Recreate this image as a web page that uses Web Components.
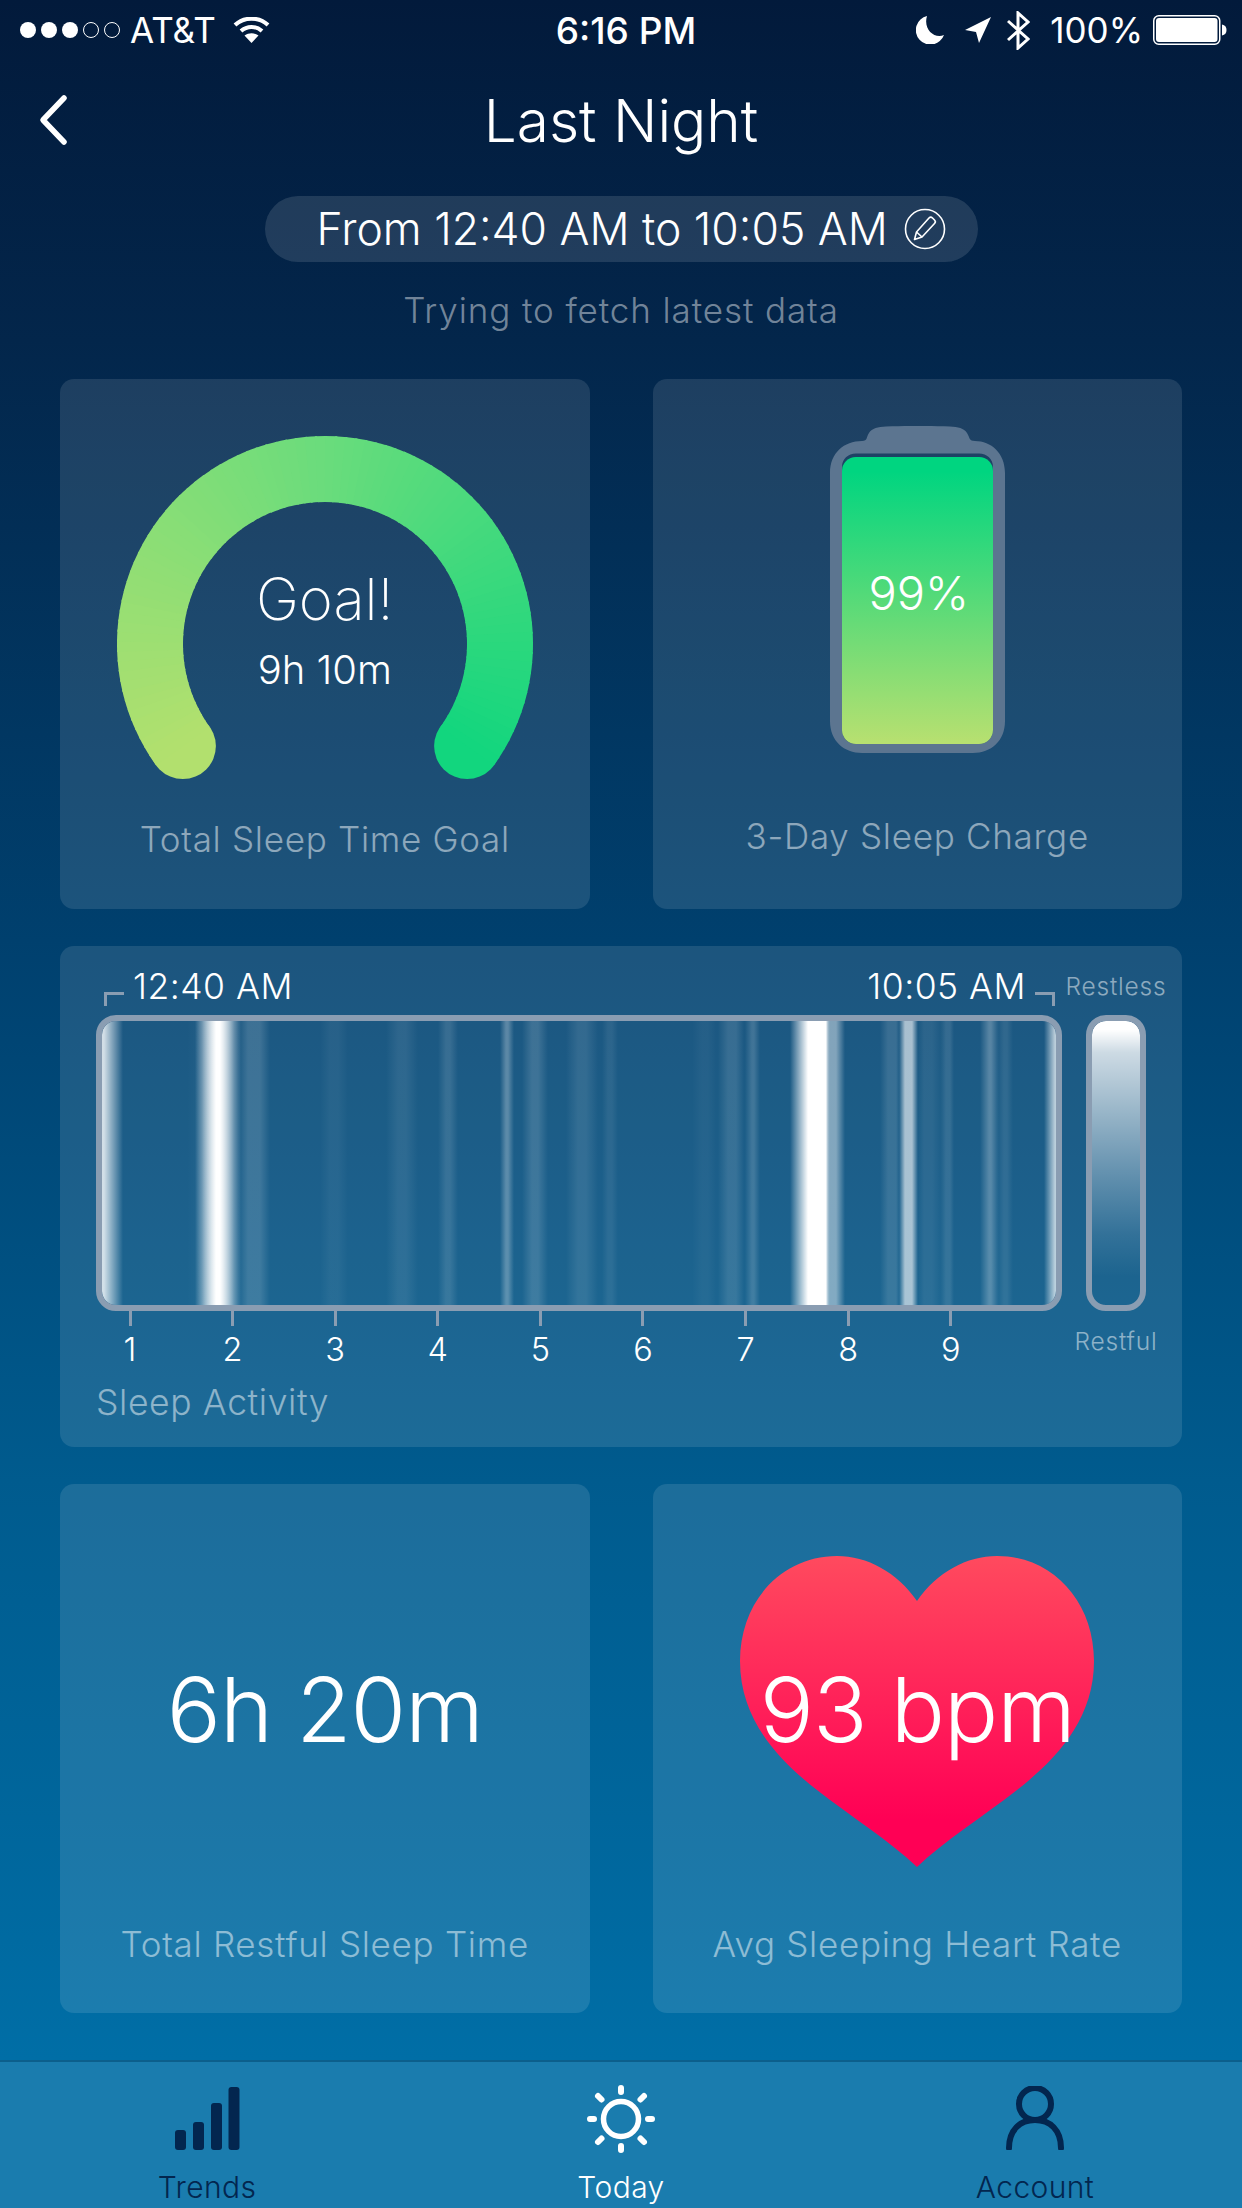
<!DOCTYPE html>
<html>
<head>
<meta charset="utf-8">
<title>Last Night</title>
<style>
html, body { margin: 0; padding: 0; }
body { font-family: Inter, "Liberation Sans", sans-serif; color: #fff; }
</style>
</head>
<body>
<sleep-app>
  <status-bar></status-bar>
  <nav-header>Last Night</nav-header>
  <time-pill>From 12:40 AM to 10:05 AM</time-pill>
  <fetch-hint>Trying to fetch latest data</fetch-hint>
  <card-grid>
    <metric-card label="Total Sleep Time Goal" style="--label-pad:48px"><goal-gauge goal="Goal!" time="9h 10m"></goal-gauge></metric-card>
    <metric-card label="3-Day Sleep Charge" style="--label-pad:51px"><charge-battery value="99%"></charge-battery></metric-card>
    <sleep-activity></sleep-activity>
    <metric-card label="Total Restful Sleep Time" style="--label-pad:47px"><big-stat>6h 20m</big-stat></metric-card>
    <metric-card label="Avg Sleeping Heart Rate" style="--label-pad:47px"><heart-rate>93 bpm</heart-rate></metric-card>
  </card-grid>
  <tab-bar>
    <tab-item name="Trends">
      <svg width="66" height="64" viewBox="0 0 66 64" fill="#03264f">
        <rect x="1" y="44" width="11" height="20" rx="3"/>
        <rect x="19" y="36" width="11" height="28" rx="3"/>
        <rect x="37" y="17" width="11" height="47" rx="3"/>
        <rect x="54.5" y="1" width="11" height="63" rx="3"/>
      </svg>
    </tab-item>
    <tab-item name="Today" active>
      <svg style="display:block;margin-top:-1px" width="72" height="68" viewBox="-36 -34 72 68" fill="none" stroke="#fff" stroke-linecap="round">
        <circle r="17.5" stroke-width="5.5"/>
        <g stroke-width="6">
          <path d="M0 -31V-27M0 31V27M-31 0H-27M31 0H27"/>
          <path d="M-23 -23L-19.500 -19.500M23 -23L19.500 -19.500M-23 23L-19.500 19.500M23 23L19.500 19.500"/>
        </g>
      </svg>
    </tab-item>
    <tab-item name="Account">
      <svg width="58" height="64" viewBox="0 0 58 64" fill="none" stroke="#03264f" stroke-width="6" stroke-linecap="round">
        <ellipse cx="29" cy="18" rx="16" ry="16"/>
        <path d="M3 62C3 44 14 34 29 34C44 34 55 44 55 62"/>
      </svg>
    </tab-item>
  </tab-bar>
</sleep-app>

<script>
// small base class, every element just hands over its shadow markup
class Base extends HTMLElement {
  constructor() {
    super();
    this.attachShadow({ mode: "open" });
    this.shadowRoot.innerHTML = this.render();
  }
  render() { return "<slot></slot>"; }
}

customElements.define("sleep-app", class extends Base {
  render() {
    return `<style>
      :host {
        display: flex; flex-direction: column;
        width: 1242px; height: 2208px; overflow: hidden;
        color: #fff;
        font-family: Inter, "Liberation Sans", sans-serif;
        background: linear-gradient(180deg, #021a3b 0, #03264b 340px, #00406e 940px, #005b8e 1480px, #006ea6 2060px);
      }
    </style><slot></slot>`;
  }
});

customElements.define("status-bar", class extends Base {
  render() {
    return `<style>
      :host { display: grid; grid-template-columns: 1fr auto 1fr; align-items: center; height: 60px; font-size: 35px; }
      .left, .right { display: flex; align-items: center; }
      .left { padding-left: 20px; }
      .right { justify-content: flex-end; padding-right: 15px; }
      .dots { display: flex; gap: 5px; margin-right: 10px; }
      .dots i { width: 16px; height: 16px; border-radius: 50%; background: #fff; box-sizing: border-box; }
      .dots i.off { background: none; border: 1.5px solid #fff; }
      .time { font-size: 37px; font-weight: 500; padding-left: 10px; }
      svg { display: block; }
    </style>
    <div class="left">
      <div class="dots"><i></i><i></i><i></i><i class="off"></i><i class="off"></i></div>
      <span>AT&amp;T</span>
      <svg style="margin-left:17px" width="37" height="26" viewBox="0 0 37 26">
        <path d="M2 8C11 -.5 26 -.5 35 8M8 14C14 8.5 23 8.5 29 14" fill="none" stroke="#fff" stroke-width="4"/>
        <path d="M18.5 26L11.5 18.5C16 15.5 21 15.5 25.5 18.5Z" fill="#fff"/>
      </svg>
    </div>
    <div class="time">6:16 PM</div>
    <div class="right">
      <svg width="28" height="28" viewBox="0 0 28 28"><path d="M11 0A14.500 14.500 0 1 0 28 19C18 23 7 13 11 0Z" fill="#fff"/></svg>
      <svg style="margin-left:21px" width="27" height="27" viewBox="0 0 27 27"><path d="M0 13L26 0L14 26L11 15Z" fill="#fff"/></svg>
      <svg style="margin-left:15px" width="23" height="39" viewBox="0 0 23 39"><path d="M1 10L21 28L11 37V2L21 11L1 29" fill="none" stroke="#fff" stroke-width="3"/></svg>
      <span style="margin-left:20px">100%</span>
      <svg style="margin-left:10px" width="74" height="30" viewBox="0 0 74 30">
        <rect x=".75" y=".75" width="66" height="28.500" rx="5" fill="none" stroke="#fff" stroke-width="1.500"/>
        <rect x="3" y="3" width="61.500" height="24" rx="3" fill="#fff"/>
        <path d="M69 9.500C72 10 73.500 12 73.500 15C73.500 18 72 20 69 20.500Z" fill="#fff"/>
      </svg>
    </div>`;
  }
});

customElements.define("nav-header", class extends Base {
  render() {
    return `<style>
      :host { display: grid; grid-template-columns: 1fr auto 1fr; align-items: center; height: 120px; font-size: 58.500px; font-weight: 300; }
      svg { display: block; margin-left: 37px; }
    </style>
    <svg width="32" height="52" viewBox="0 0 32 52" fill="none" stroke="#fff" stroke-width="5.500" stroke-linecap="round" stroke-linejoin="round"><path d="M27 4L6 26L27 48"/></svg>
    <div><slot></slot></div>
    <div></div>`;
  }
});

customElements.define("time-pill", class extends Base {
  render() {
    return `<style>
      :host { display: flex; align-self: center; align-items: center; box-sizing: border-box; width: 713px; height: 66px; margin-top: 16px; padding-left: 52px; gap: 15px; border-radius: 33px; background: rgba(255,255,255,.12); font-size: 44.500px; font-weight: 300; white-space: nowrap; }
      svg { display: block; flex: none; }
    </style>
    <slot></slot>
    <svg width="44" height="44" viewBox="0 0 44 44" fill="none" stroke="#fff" stroke-width="1.600">
      <circle cx="22" cy="22" r="19.500"/>
      <path d="M11.500 32.500L13.500 25L26 11C27 10 28.500 10 29.500 11L31.500 13C32.500 14 32.500 15.500 31.500 16.500L19 30ZM13.500 25L19 30" stroke-linejoin="round"/>
    </svg>`;
  }
});

customElements.define("fetch-hint", class extends Base {
  render() {
    return `<style>
      :host { display: block; margin-top: 26px; line-height: 44px; text-align: center; font-size: 35px; font-weight: 300; letter-spacing: .9px; color: rgba(255,255,255,.46); }
    </style><slot></slot>`;
  }
});

customElements.define("card-grid", class extends Base {
  render() {
    return `<style>
      :host { display: grid; grid-template-columns: 1fr 1fr; grid-template-rows: 530px 500.500px 529px; column-gap: 63px; row-gap: 37px; margin-top: 47px; padding: 0 60px; }
    </style><slot></slot>`;
  }
});

customElements.define("metric-card", class extends Base {
  render() {
    return `<style>
      :host { display: grid; grid-template-rows: 1fr auto; justify-items: center; border-radius: 14px; background: rgba(255,255,255,.11); }
      .label { padding-bottom: var(--label-pad, 40px); line-height: 44px; font-size: 35px; font-weight: 300; letter-spacing: .7px; color: rgba(255,255,255,.5); white-space: nowrap; }
    </style>
    <div><slot></slot></div>
    <div class="label">${this.getAttribute("label")}</div>`;
  }
});

// the ring colour follows the sweep, not a straight line, so draw it in short pieces
const RING = [[178, 224, 110], [106, 220, 124], [18, 214, 126]];
function ringColor(t) {
  const s = t < .5 ? t * 2 : (t - .5) * 2;
  const [a, b] = t < .5 ? [RING[0], RING[1]] : [RING[1], RING[2]];
  return `rgb(${a.map((v, i) => Math.round(v + (b[i] - v) * s)).join(",")})`;
}
function ringPieces() {
  const cx = 210, cy = 208, r = 175, from = 234.300, sweep = 251.400, n = 90;
  const pt = deg => {
    const a = deg * Math.PI / 180;
    return [(cx + r * Math.sin(a)).toFixed(2), (cy - r * Math.cos(a)).toFixed(2)];
  };
  const [sx, sy] = pt(from), [ex, ey] = pt(from + sweep);
  let out = `<circle cx="${sx}" cy="${sy}" r="33" fill="${ringColor(0)}"/><circle cx="${ex}" cy="${ey}" r="33" fill="${ringColor(1)}"/>`;
  for (let i = 0; i < n; i++) {
    const a = from + sweep * i / n;
    const b = Math.min(from + sweep, from + sweep * (i + 1) / n + .6);
    const [x1, y1] = pt(a), [x2, y2] = pt(b);
    out += `<path d="M${x1} ${y1}A${r} ${r} 0 0 1 ${x2} ${y2}" stroke="${ringColor((i + .5) / n)}"/>`;
  }
  return out;
}

customElements.define("goal-gauge", class extends Base {
  render() {
    return `<style>
      :host { display: grid; width: 420px; margin-top: 57px; }
      :host > * { grid-area: 1 / 1; }
      svg { display: block; }
      .txt { display: flex; flex-direction: column; align-items: center; padding-top: 128px; }
      .goal { font-size: 58px; line-height: 70px; font-weight: 200; }
      .time { margin-top: 13px; font-size: 40px; line-height: 46px; font-weight: 300; }
    </style>
    <svg width="420" height="360" viewBox="0 0 420 360" fill="none" stroke-width="66">${ringPieces()}</svg>
    <div class="txt">
      <div class="goal">${this.getAttribute("goal")}</div>
      <div class="time">${this.getAttribute("time")}</div>
    </div>`;
  }
});

customElements.define("charge-battery", class extends Base {
  render() {
    return `<style>
      :host { display: grid; width: 175px; margin-top: 47px; }
      :host > * { grid-area: 1 / 1; }
      svg { display: block; }
      .val { padding: 137px 0 0 3px; text-align: center; font-size: 47px; line-height: 60px; font-weight: 300; }
    </style>
    <svg width="175" height="327" viewBox="0 0 175 327">
      <defs>
        <linearGradient id="fill" x1="0" y1="0" x2="0" y2="1">
          <stop offset=".05" stop-color="#00d580"/>
          <stop offset="1" stop-color="#b8e070"/>
        </linearGradient>
      </defs>
      <path fill="#5c7590" fill-rule="evenodd" d="M0 47C0 27 14 15 32 15C38 15 36 11 39 7C42 2 48 1 56 .5C76 -.2 100 -.2 120 .5C128 1 134 2 137 7C140 12 139 15 145 15C161 15 175 27 175 47V295C175 315 161 327 143 327H32C14 327 0 315 0 295ZM26 27.500C18 27.500 12 33 12 41V304C12 312 18 318 26 318H149C157 318 163 312 163 304V41C163 33 157 27.500 149 27.500Z"/>
      <rect x="12" y="31" width="151" height="287" rx="14" fill="url(#fill)"/>
    </svg>
    <div class="val">${this.getAttribute("value")}</div>`;
  }
});

// stripes measured off the chart: start, plateau start, plateau end, end, alpha
const STRIPES = [
  [0, 0, 2, 21, .8], [85, 100, 106, 120, .04], [93, 114, 118, 139, 1], [100, 112, 120, 132, .35],
  [136, 146, 158, 168, .15], [218, 228, 236, 246, .05], [284, 296, 304, 316, .08],
  [336, 344, 348, 356, .12], [398, 404, 406, 412, .28], [420, 430, 436, 446, .15],
  [464, 476, 484, 496, .1], [500, 506, 510, 516, .07], [590, 600, 606, 614, .04],
  [616, 626, 634, 642, .12], [643, 650, 652, 658, .16], [688, 706, 724, 728, 1],
  [724, 728, 734, 743, .45], [778, 786, 794, 798, .13], [797, 803, 810, 816, .62],
  [816, 822, 830, 840, .07], [838, 844, 848, 852, .11], [878, 887, 889, 897, .26],
  [895, 902, 905, 911, .09], [942, 953, 954, 954, .7]
];

customElements.define("sleep-activity", class extends Base {
  render() {
    const layers = STRIPES.map(([a, b, c, d, o]) => {
      const col = `rgba(255,255,255,${o})`;
      const zero = `rgba(255,255,255,0)`;
      return `linear-gradient(90deg, ${zero} ${a}px, ${col} ${b}px, ${col} ${c}px, ${zero} ${d}px)`;
    }).join(",");
    const ticks = [1, 2, 3, 4, 5, 6, 7, 8, 9].map(n => `<div class="tick"><i></i><span>${n}</span></div>`).join("");
    return `<style>
      :host { display: grid; grid-column: 1 / 3; grid-template-columns: 966px 60px; grid-template-rows: 69px 296px auto; column-gap: 24px; padding-left: 36px; border-radius: 14px; background: rgba(255,255,255,.11); }
      .times { display: flex; justify-content: space-between; padding: 20px 7px 0 8px; font-size: 35.500px; line-height: 42px; font-weight: 300; letter-spacing: .5px; }
      .times div { display: flex; gap: 9px; }
      .br { width: 20px; height: 14px; margin-top: 26px; box-sizing: border-box; border-top: 3px solid #8a9db2; }
      .br.l { border-left: 3px solid #8a9db2; }
      .br.r { border-right: 3px solid #8a9db2; }
      .side { justify-self: center; font-size: 24.500px; font-weight: 300; letter-spacing: .8px; color: rgba(255,255,255,.5); white-space: nowrap; }
      .side.top { padding-top: 25px; line-height: 30px; }
      .side.bottom { margin-top: 15px; line-height: 30px; }
      .bar { box-sizing: border-box; border: 6px solid #8a9db2; border-radius: 20px; background-clip: padding-box; background-origin: padding-box; }
      .legend { box-sizing: border-box; border: 6px solid #8a9db2; border-radius: 20px; background-clip: padding-box;
        background-image: linear-gradient(180deg, #fff 0, #fff 3%, rgba(255,255,255,.78) 11%, rgba(255,255,255,.55) 32%, rgba(255,255,255,.3) 55%, rgba(255,255,255,.1) 75%, rgba(255,255,255,0) 90%); }
      .ticks { display: flex; margin-left: -17.300px; }
      .tick { display: flex; flex-direction: column; align-items: center; width: 102.600px; font-size: 32.500px; line-height: 40px; font-weight: 300; }
      .tick i { width: 3px; height: 15px; background: #8a9db2; }
      .tick span { margin-top: 4px; }
      .name { margin-top: 11px; line-height: 44px; font-size: 35.500px; font-weight: 300; letter-spacing: .6px; color: rgba(255,255,255,.5); }
    </style>
    <div class="times">
      <div><i class="br l"></i><span>12:40 AM</span></div>
      <div><span>10:05 AM</span><i class="br r"></i></div>
    </div>
    <div class="side top">Restless</div>
    <div class="bar" style="background-image:${layers}"></div>
    <div class="legend"></div>
    <div>
      <div class="ticks">${ticks}</div>
      <div class="name">Sleep Activity</div>
    </div>
    <div class="side bottom">Restful</div>`;
  }
});

customElements.define("big-stat", class extends Base {
  render() {
    return `<style>
      :host { display: block; padding-top: 171px; font-size: 90px; letter-spacing: -1px; line-height: 110px; font-weight: 300; white-space: nowrap; }
    </style><slot></slot>`;
  }
});

customElements.define("heart-rate", class extends Base {
  render() {
    return `<style>
      :host { display: grid; width: 354px; margin-top: 72px; }
      :host > * { grid-area: 1 / 1; }
      svg { display: block; }
      .val { padding-top: 99px; text-align: center; font-size: 90px; letter-spacing: -1px; line-height: 110px; font-weight: 300; white-space: nowrap; }
    </style>
    <svg width="354" height="311" viewBox="0 0 354 311">
      <defs>
        <linearGradient id="hrt" x1="0" y1="0" x2="0" y2="1">
          <stop offset="0" stop-color="#ff4a5e"/>
          <stop offset=".85" stop-color="#ff0055"/>
        </linearGradient>
      </defs>
      <path fill="url(#hrt)" d="M177 45C157 16 127 0 97 0C42 0 0 45 0 105C0 165 40 205 77 234C110 260 150 285 177 311C204 285 244 260 277 234C314 205 354 165 354 105C354 45 312 0 257 0C227 0 197 16 177 45Z"/>
    </svg>
    <div class="val"><slot></slot></div>`;
  }
});

customElements.define("tab-bar", class extends Base {
  render() {
    return `<style>
      :host { display: grid; grid-template-columns: repeat(3, 1fr); box-sizing: border-box; height: 148px; margin-top: auto; border-top: 2px solid #0c5f8c; background: #1a7cae; }
    </style><slot></slot>`;
  }
});

customElements.define("tab-item", class extends Base {
  render() {
    const on = this.hasAttribute("active");
    return `<style>
      :host { display: flex; flex-direction: column; align-items: center; padding-top: 24px; font-size: 30px; line-height: 38px; font-weight: 300; letter-spacing: .4px; color: ${on ? "#fff" : "#03264f"}; }
      .ico { height: 64px; }
      .name { margin-top: 18px; }
    </style>
    <div class="ico"><slot></slot></div>
    <div class="name">${this.getAttribute("name")}</div>`;
  }
});
</script>
</body>
</html>
